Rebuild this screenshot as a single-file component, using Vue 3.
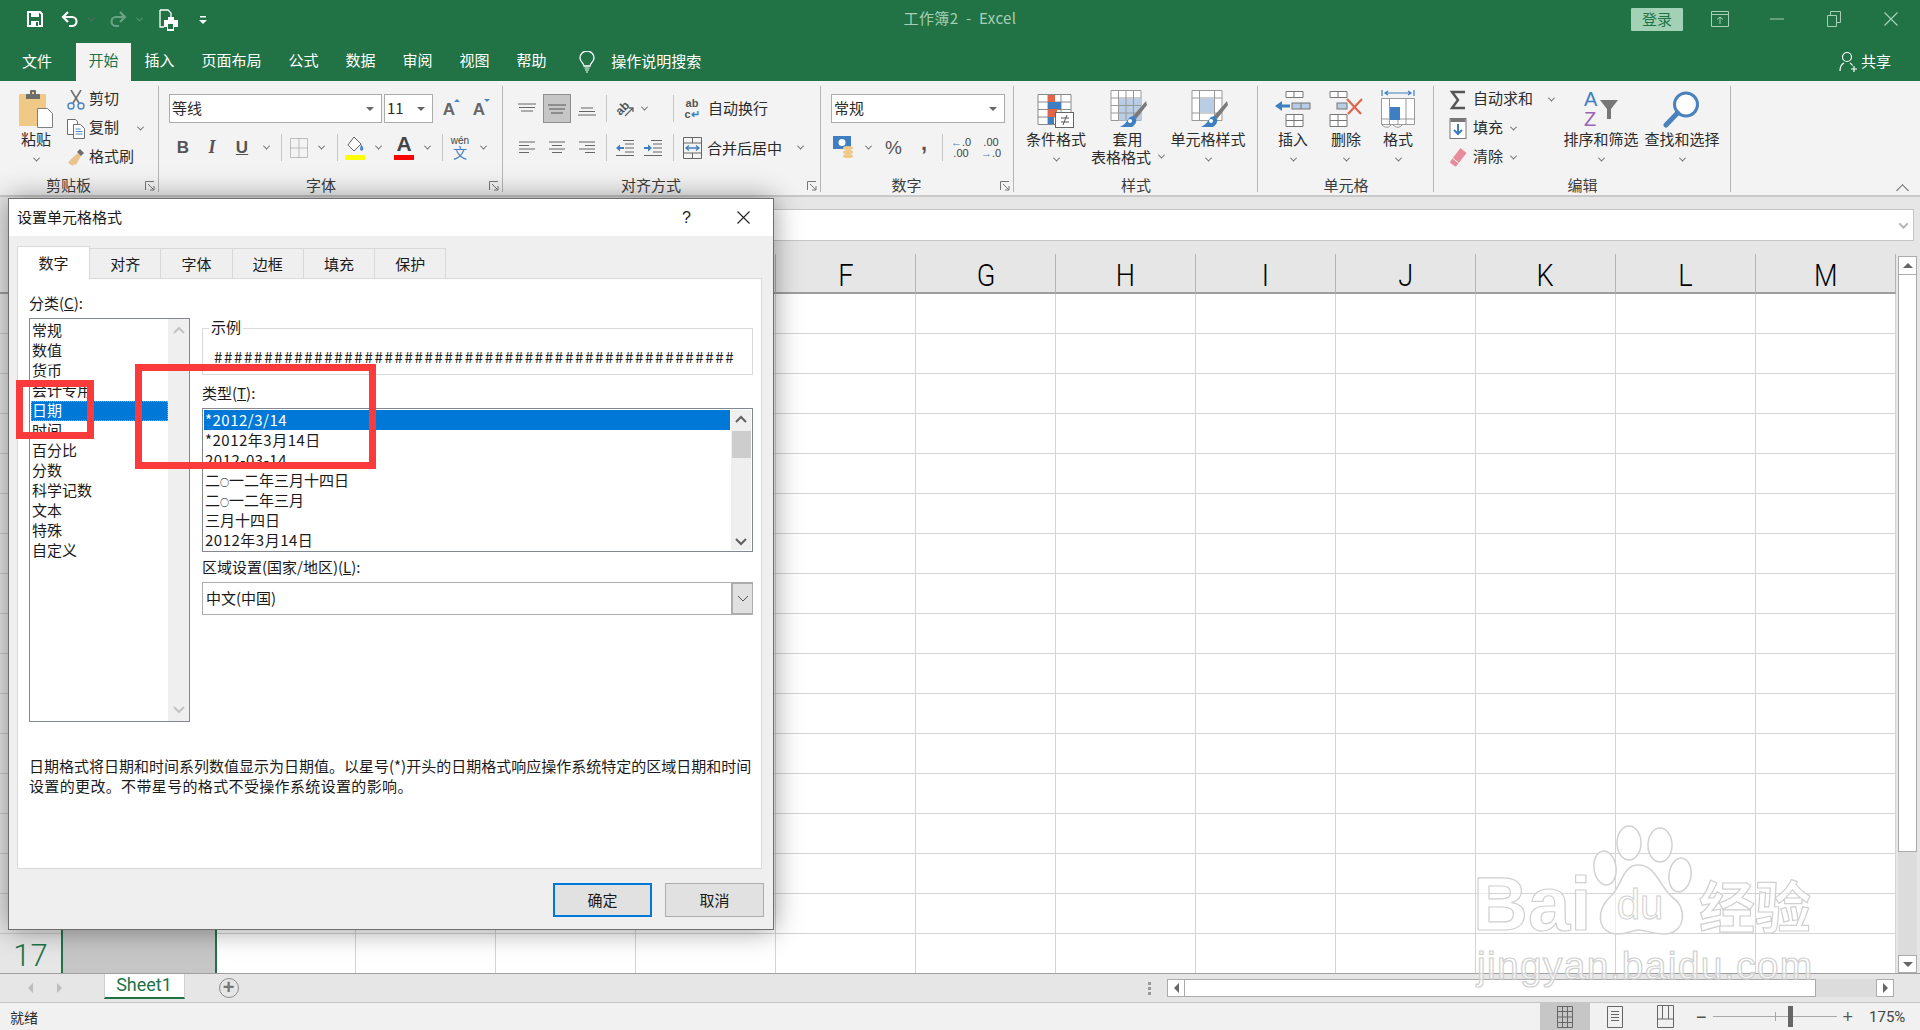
<script setup>
const tabs = ['插入', '页面布局', '公式', '数据', '审阅', '视图', '帮助']
// A-E sit behind the dialog
const columns = ['', '', '', '', 'F', 'G', 'H', 'I', 'J', 'K', 'L', 'M']
const rows = Array.from({ length: 17 }, (_, i) => i + 1)
const dialogTabs = ['数字', '对齐', '字体', '边框', '填充', '保护']
const categories = ['常规', '数值', '货币', '会计专用', '日期', '时间', '百分比', '分数', '科学记数', '文本', '特殊', '自定义']
const dateTypes = ['*2012/3/14', '*2012年3月14日', '2012-03-14', '二○一二年三月十四日', '二○一二年三月', '三月十四日', '2012年3月14日']
const sample = '#'.repeat(52)
const hasDigits = (t) => /\d/.test(t)
</script>

<template>
  <div class="app">
    <header class="titlebar">
      <div class="qat">
        <svg class="qat-save" width="16" height="16" viewBox="0 0 16 16"><path d="M1 1h12l2 2v12H1z" fill="none" stroke="#fff" stroke-width="2"/><path d="M4 1h8v5H4zM4 10h8v5H4z" fill="#fff"/><rect x="9" y="11" width="2" height="4" fill="#217346"/></svg>
        <svg class="qat-undo" width="18" height="17" viewBox="0 0 18 17"><path d="M7 1 2 6l5 5M2 6h9a4.500 4.500 0 0 1 0 9H8" fill="none" stroke="#fff" stroke-width="2.200"/></svg>
        <i class="chev chev-qat"></i>
        <svg class="qat-redo" width="18" height="17" viewBox="0 0 18 17"><path d="M11 1l5 5-5 5M16 6H7a4.500 4.500 0 0 0 0 9h3" fill="none" stroke="#69a284" stroke-width="2.200"/></svg>
        <i class="chev chev-qat dim"></i>
        <svg class="qat-print" width="20" height="23" viewBox="0 0 20 23"><path d="M1 1h8l3 3v4M1 1v17h4" fill="none" stroke="#fff" stroke-width="1.300"/><path d="M9 8h6v3h4v7h-4v4H8v-4H5v-7h4z" fill="#fff"/><rect x="9" y="15" width="5" height="5" fill="#217346"/></svg>
        <svg class="qat-more" width="8" height="8" viewBox="0 0 8 8"><path d="M1 0h6v1.500H1zM0 4h8L4 8z" fill="#fff"/></svg>
      </div>
      <div class="doc-title">工作簿2&nbsp; -&nbsp; Excel</div>
      <div class="win-controls">
        <span class="login">登录</span>
        <svg class="ctl ctl-ribbon" width="18" height="16" viewBox="0 0 18 16"><path d="M.5.500h17v15H.5zM.5 3.500h17M9 13V6M6 8.500 9 6l3 2.500" fill="none" stroke="#a6cfb6"/></svg>
        <svg class="ctl ctl-min" width="14" height="2" viewBox="0 0 14 2"><path d="M0 1h14" stroke="#a6cfb6"/></svg>
        <svg class="ctl ctl-max" width="14" height="16" viewBox="0 0 14 16"><path d="M.5 4.500h9v11h-9zM3.500 4V.5h10v11H10" fill="none" stroke="#a6cfb6"/></svg>
        <svg class="ctl ctl-close" width="14" height="14" viewBox="0 0 14 14"><path d="M.5.500l13 13M13.500.500l-13 13" stroke="#a6cfb6" stroke-width="1.200"/></svg>
      </div>
    </header>

    <nav class="menubar">
      <span class="tab-file">文件</span>
      <span class="tab tab-active">开始</span>
      <span v-for="tab in tabs" :key="tab" class="tab">{{ tab }}</span>
      <svg class="bulb" width="16" height="22" viewBox="0 0 16 22"><path d="M5 15c0-3-4-4-4-8a7 7 0 0 1 14 0c0 4-4 5-4 8z" fill="none" stroke="#fff" stroke-width="1.300"/><path d="M5.500 17h5M6 19h4M7 21h2" stroke="#fff"/></svg>
      <span class="search">操作说明搜索</span>
      <span class="share">
        <svg width="18" height="22" viewBox="0 0 18 22"><circle cx="8" cy="6" r="4.500" fill="none" stroke="#fff" stroke-width="1.200"/><path d="M1 20c0-5 2-7 4-8M11 12c1 .5 2 1.500 2.500 2.500M12 18h6M15 15v6" fill="none" stroke="#fff" stroke-width="1.200"/></svg>
        <span>共享</span>
      </span>
    </nav>

    <section class="ribbon">
      <!-- 剪贴板 -->
      <div class="group group-clip">
        <div class="group-body clip-body">
          <div class="big paste">
            <svg width="34" height="38" viewBox="0 0 34 38"><rect y="4" width="27" height="32" rx="1" fill="#f0c987"/><path d="M7 9V4h4V1a1 1 0 0 1 1-1h4a1 1 0 0 1 1 1v3h4v5z" fill="#6e6e6e"/><rect x="13" y="2" width="2" height="2" fill="#f0c987"/><path d="M18.500 18.500h10l5 5v14h-15z" fill="#fff" stroke="#7f7f7f"/></svg>
            <span class="big-label">粘贴</span>
            <i class="chev big-chev"></i>
          </div>
          <div class="small-col">
            <div class="small">
              <svg class="small-icon" width="18" height="20" viewBox="0 0 18 20"><path d="M4 0l8 13M14 0 6 13" stroke="#6e6e6e" stroke-width="1.600"/><circle cx="4" cy="16" r="3" fill="none" stroke="#4a86c5" stroke-width="1.400"/><circle cx="14" cy="16" r="3" fill="none" stroke="#4a86c5" stroke-width="1.400"/></svg>
              <span>剪切</span>
            </div>
            <div class="small">
              <svg class="small-icon" width="18" height="20" viewBox="0 0 18 20"><path d="M.5.500h8l2 2v13H.5z" fill="#fff" stroke="#6e6e6e"/><path d="M6.500 5.500h7l4 4v10h-11z" fill="#fff" stroke="#6e6e6e"/><path d="M8.500 10h5M8.500 12.500h7M8.500 15h7" stroke="#4a86c5"/></svg>
              <span>复制</span>
              <i class="chev copy-chev"></i>
            </div>
            <div class="small">
              <svg class="small-icon" width="18" height="18" viewBox="0 0 18 18"><path d="M11 4l3 3-5 9-2-1-1 2-5-3 3-4z" fill="#e7c48c"/><path d="M10 3l3-3 4 4-3 3z" fill="#6e6e6e"/></svg>
              <span>格式刷</span>
            </div>
          </div>
        </div>
        <div class="group-label">剪贴板</div>
        <svg class="launcher" width="10" height="10" viewBox="0 0 10 10"><path d="M.5 9V.5H9M3 3l6 6M9 5v4H5" fill="none" stroke="#777"/></svg>
      </div>

      <!-- 字体 -->
      <div class="group group-font">
        <div class="group-body padded">
          <div class="row-top">
            <div class="combo combo-font"><span>等线</span><i class="tri"></i></div>
            <div class="combo combo-size"><span>11</span><i class="tri"></i></div>
            <span class="grow">A<i class="up"></i></span>
            <span class="grow">A<i class="down"></i></span>
          </div>
          <div class="row-font">
            <span class="cmd bold">B</span>
            <span class="cmd italic">I</span>
            <span class="cmd under">U</span>
            <span class="cmd"><i class="chev"></i></span>
            <span class="cmd"><i class="vsep"></i></span>
            <span class="cmd">
              <svg width="18" height="20" viewBox="0 0 18 20"><path d="M.5.500h17v19H.5zM9 .5v19M.5 10h17" fill="none" stroke="#888" stroke-dasharray="1 1"/></svg>
            </span>
            <span class="cmd"><i class="chev"></i></span>
            <span class="cmd"><i class="vsep"></i></span>
            <span class="cmd">
              <svg width="20" height="24" viewBox="0 0 20 24"><path d="M9 1 3 9l6 6 7-7z" fill="#fff" stroke="#666"/><path d="M16 8c2 3 3 4 2 6-1 1-3 1-3-1z" fill="#4a86c5"/><rect y="19" width="20" height="5" fill="#ffff00"/></svg>
            </span>
            <span class="cmd"><i class="chev"></i></span>
            <span class="cmd font-color">A<i></i></span>
            <span class="cmd"><i class="chev"></i></span>
            <span class="cmd"><i class="vsep"></i></span>
            <span class="cmd wen"><b>wén</b><b>文</b></span>
            <span class="cmd"><i class="chev"></i></span>
          </div>
        </div>
        <div class="group-label">字体</div>
        <svg class="launcher" width="10" height="10" viewBox="0 0 10 10"><path d="M.5 9V.5H9M3 3l6 6M9 5v4H5" fill="none" stroke="#777"/></svg>
      </div>

      <!-- 对齐方式 -->
      <div class="group group-align">
        <div class="group-body padded">
          <div class="row-align-1">
            <span class="cmd"><svg width="18" height="12" viewBox="0 0 18 12"><path d="M0 1h18M1 4.500h16M3 8h12" stroke="#666"/></svg></span>
            <span class="cmd"><span class="pressed"><svg width="18" height="12" viewBox="0 0 18 12"><path d="M0 2h18M1 6h16M3 10h12" stroke="#555"/></svg></span></span>
            <span class="cmd"><svg class="down4" width="18" height="12" viewBox="0 0 18 12"><path d="M3 3h12M1 6.500h16M0 10h18" stroke="#666"/></svg></span>
            <span class="cmd"><i class="vsep"></i></span>
            <span class="cmd">
              <svg width="20" height="20" viewBox="0 0 20 20"><text class="orient" transform="rotate(-45 8 10)" x="1" y="13">ab</text><path d="M10 17 18 9M18 13V9h-4" fill="none" stroke="#666" stroke-width="1.300"/></svg>
            </span>
            <span class="cmd"><i class="chev"></i></span>
            <span></span>
            <span class="cmd"><i class="vsep"></i></span>
            <span class="cmd abc"><b>ab</b><b>c<small>↵</small></b></span>
            <span class="txt wrap-txt">自动换行</span>
          </div>
          <div class="row-align-2">
            <span class="cmd"><svg width="16" height="13" viewBox="0 0 16 13"><path d="M0 1h16M0 4.500h10M0 8h16M0 11.500h10" stroke="#666"/></svg></span>
            <span class="cmd"><svg width="16" height="13" viewBox="0 0 16 13"><path d="M0 1h16M3 4.500h10M0 8h16M3 11.500h10" stroke="#666"/></svg></span>
            <span class="cmd"><svg width="16" height="13" viewBox="0 0 16 13"><path d="M0 1h16M6 4.500h10M0 8h16M6 11.500h10" stroke="#666"/></svg></span>
            <span class="cmd"><i class="vsep"></i></span>
            <span class="cmd"><svg width="18" height="16" viewBox="0 0 18 16"><path d="M7 .5h11M9 4h9M9 8h9M9 12h9M0 15.500h18" stroke="#666"/><path d="M0 8l4-3.500v2.500h4v2H4v2.500z" fill="#3f7fc1"/></svg></span>
            <span class="cmd"><svg width="18" height="16" viewBox="0 0 18 16"><path d="M7 .5h11M9 4h9M9 8h9M9 12h9M0 15.500h18" stroke="#666"/><path d="M8 8 4 4.500V7H0v2h4v2.500z" fill="#3f7fc1"/></svg></span>
            <span class="cmd"><i class="vsep"></i></span>
            <span class="cmd"><svg width="19" height="22" viewBox="0 0 19 22"><path d="M.5.500h18v21H.5zM.5 6h18M.5 16h18M9.500.5V6M9.500 16v5.500" fill="none" stroke="#666"/><path d="M3 11h13M6 8.500 3 11l3 2.500M13 8.500l3 2.500-3 2.500" fill="none" stroke="#3f7fc1" stroke-width="1.300"/></svg></span>
            <span class="txt merge">合并后居中</span>
            <i class="chev merge-chev"></i>
          </div>
        </div>
        <div class="group-label">对齐方式</div>
        <svg class="launcher" width="10" height="10" viewBox="0 0 10 10"><path d="M.5 9V.5H9M3 3l6 6M9 5v4H5" fill="none" stroke="#777"/></svg>
      </div>

      <!-- 数字 -->
      <div class="group group-num">
        <div class="group-body padded">
          <div class="row-top"><div class="combo combo-num"><span>常规</span><i class="tri"></i></div></div>
          <div class="row-num">
            <span class="cmd"><svg width="22" height="24" viewBox="0 0 22 24"><rect width="18" height="13" fill="#3f7fc1"/><circle cx="9" cy="6.500" r="3.500" fill="#fff"/><ellipse cx="15" cy="12" rx="5" ry="2" fill="#f0c987"/><ellipse cx="15" cy="16" rx="5" ry="2" fill="#f0c987"/><ellipse cx="15" cy="20" rx="5" ry="2" fill="#f0c987"/></svg></span>
            <span class="cmd"><i class="chev"></i></span>
            <span class="cmd percent">%</span>
            <span class="cmd comma">,</span>
            <span class="cmd"><i class="vsep"></i></span>
            <span class="cmd dec"><b><u>←</u>.0</b><b>.00</b></span>
            <span class="cmd dec"><b>.00</b><b><u>→</u>.0</b></span>
          </div>
        </div>
        <div class="group-label">数字</div>
        <svg class="launcher" width="10" height="10" viewBox="0 0 10 10"><path d="M.5 9V.5H9M3 3l6 6M9 5v4H5" fill="none" stroke="#777"/></svg>
      </div>

      <!-- 样式 -->
      <div class="group group-style">
        <div class="group-body bigs">
          <div class="big w-cond">
            <svg width="38" height="38" viewBox="0 0 38 38"><path d="M1 4.500h33v30H1zM1 12h33M1 19.500h33M1 27h33M11 4.500v30M24 4.500v30" fill="#fff" stroke="#8a8a8a"/><rect x="11" y="5" width="7" height="7" fill="#e0654a"/><rect x="11" y="12" width="13" height="7" fill="#3f7fc1"/><rect x="11" y="19" width="9" height="8" fill="#e0654a"/><rect x="11" y="27" width="6" height="7" fill="#3f7fc1"/><rect x="18.500" y="22.500" width="18" height="15" fill="#fff" stroke="#666"/><path d="M24 28h8M24 32h8M30 25l-4 10" stroke="#555"/></svg>
            <span class="big-label">条件格式</span>
            <i class="chev big-chev"></i>
          </div>
          <div class="big w-table">
            <svg class="nudge" width="38" height="38" viewBox="0 0 38 38"><path d="M1 .5h30v30H1zM1 8h30M1 15.500h30M1 23h30M8.500.5v30M16 .5v30M23.500.5v30" fill="#fff" stroke="#999"/><rect x="9" y="8.500" width="22" height="22" fill="#b9cde5"/><path d="M8.500 8v22M16 8v22M23.500 8v22M8.500 15.500H31M8.500 23H31" stroke="#999"/><path d="M36 11 23 26l3 3 11-14z" fill="#7a7a7a"/><path d="M24 26c-5 0-6 4-7 5-2 3-4 4-7 6h12c3-2 5-5 4-8z" fill="#3f7fc1"/><circle cx="20" cy="31" r="2" fill="#fff"/></svg>
            <span class="big-label">套用</span>
            <span class="big-label second">表格格式<i class="chev inline-chev"></i></span>
          </div>
          <div class="big w-cell">
            <svg class="nudge" width="38" height="38" viewBox="0 0 38 38"><path d="M1 .5h30v30H1zM1 8h30M1 23h30M8.500.5V8M23.500.5V8M8.500 23v7.500M23.500 23v7.500M8.500 8v15M23.500 8v15" fill="#fff" stroke="#999"/><rect x="9" y="8.500" width="14" height="14" fill="#b9cde5"/><path d="M36 11 23 26l3 3 11-14z" fill="#7a7a7a"/><path d="M24 26c-5 0-6 4-7 5-2 3-4 4-7 6h12c3-2 5-5 4-8z" fill="#3f7fc1"/><circle cx="20" cy="31" r="2" fill="#fff"/></svg>
            <span class="big-label">单元格样式</span>
            <i class="chev big-chev"></i>
          </div>
        </div>
        <div class="group-label">样式</div>
      </div>

      <!-- 单元格 -->
      <div class="group group-cells">
        <div class="group-body bigs">
          <div class="big w-ins">
            <svg width="38" height="38" viewBox="0 0 38 38"><path d="M12 1.500h17v6H12zM20 1.500v6M12 24.500h17v12H12zM20 24.500v12M12 30.500h17" fill="#fff" stroke="#777"/><rect x="18" y="13" width="18" height="6" fill="#b9cde5" stroke="#777"/><path d="M27 13v6" stroke="#777"/><path d="M1 16l7-5v3.500h8v3H8V21z" fill="#3f7fc1"/></svg>
            <span class="big-label">插入</span>
            <i class="chev big-chev"></i>
          </div>
          <div class="big w-del">
            <svg width="38" height="38" viewBox="0 0 38 38"><path d="M3 1.500h17v6H3zM11 1.500v6M3 24.500h17v12H3zM11 24.500v12M3 30.500h17" fill="#fff" stroke="#777"/><rect x="10" y="13" width="10" height="6" fill="#b9cde5" stroke="#777"/><path d="M20 9l14 15M35 9 21 24" stroke="#e0654a" stroke-width="2.200"/></svg>
            <span class="big-label">删除</span>
            <i class="chev big-chev"></i>
          </div>
          <div class="big w-fmt">
            <svg width="38" height="38" viewBox="0 0 38 38"><path d="M3 0v6M35 0v6M6 3h26M9 1 6 3l3 2M29 1l3 2-3 2" fill="none" stroke="#3f7fc1" stroke-width="1.200"/><path d="M2.500 8.500h33v26h-33zM2.500 29h33M10.500 8.500v26M27 8.500v26M19 29v5" fill="#fff" stroke="#999"/><rect x="11" y="17" width="10" height="13" fill="#3f7fc1"/><path d="M3 35c3 3 7 3 9 0M14 35c3 3 7 3 9 0" fill="none" stroke="#999"/></svg>
            <span class="big-label">格式</span>
            <i class="chev big-chev"></i>
          </div>
        </div>
        <div class="group-label">单元格</div>
      </div>

      <!-- 编辑 -->
      <div class="group group-edit">
        <div class="group-body edit-body">
          <div class="small-col edit-col">
            <div class="small">
              <svg class="small-icon" width="16" height="20" viewBox="0 0 16 20"><path d="M15 2H2l6 8-6 8h13" fill="none" stroke="#555" stroke-width="2.400"/></svg>
              <span>自动求和</span>
              <i class="chev sum-chev"></i>
            </div>
            <div class="small">
              <svg class="small-icon" width="17" height="21" viewBox="0 0 17 21"><rect x=".5" y=".5" width="16" height="20" fill="#fff" stroke="#777"/><rect x="1" y="1" width="15" height="3" fill="#777"/><path d="M8.500 6v10M4.500 12l4 4 4-4" fill="none" stroke="#3f7fc1" stroke-width="2"/></svg>
              <span>填充</span>
              <i class="chev fill-chev"></i>
            </div>
            <div class="small">
              <svg class="small-icon" width="17" height="19" viewBox="0 0 17 19"><path d="M11 0l6 5-10 13a1.500 1.500 0 0 1-2 0L1 15a1.500 1.500 0 0 1 0-2z" fill="#e88b9c"/><path d="M3 10l6 5" stroke="#fff"/></svg>
              <span>清除</span>
              <i class="chev fill-chev"></i>
            </div>
          </div>
          <div class="big w-sort">
            <svg width="38" height="38" viewBox="0 0 38 38"><text class="sort-a" x="2" y="16">A</text><text class="sort-z" x="2" y="36">Z</text><path d="M18 10h18l-7 9v10h-4V19z" fill="#777"/></svg>
            <span class="big-label">排序和筛选</span>
            <i class="chev big-chev"></i>
          </div>
          <div class="big w-find">
            <svg width="38" height="38" viewBox="0 0 38 38"><circle cx="23" cy="14.500" r="11.500" fill="#fff" stroke="#4a82bd" stroke-width="3"/><path d="M14.500 23 3 35" stroke="#4a82bd" stroke-width="5" stroke-linecap="round"/></svg>
            <span class="big-label">查找和选择</span>
            <i class="chev big-chev"></i>
          </div>
        </div>
        <div class="group-label">编辑</div>
      </div>

      <i class="chev collapse"></i>
    </section>

    <div class="formula-bar">
      <div class="formula-input"><i class="chev chev-wide"></i></div>
    </div>

    <main class="sheet">
      <div class="grid">
        <div class="corner"></div>
        <div class="col-head"></div>
        <div v-for="(col, i) in columns" :key="i" class="col-head"><span>{{ col }}</span></div>
        <template v-for="row in rows" :key="row">
          <div class="row-head">{{ row === 17 ? row : '' }}</div>
          <div class="cell cell-a"></div>
          <div v-for="(col, i) in columns" :key="i" class="cell"></div>
        </template>
      </div>
      <div class="vscroll">
        <div class="sb-btn"><i class="tri tri-up"></i></div>
        <div class="sb-thumb"></div>
        <div class="sb-track"></div>
        <div class="sb-btn sb-btn-end"><i class="tri"></i></div>
      </div>
    </main>

    <div class="sheetbar">
      <i class="nav nav-left"></i>
      <i class="nav nav-right"></i>
      <div class="sheet-tab">Sheet1</div>
      <div class="add-sheet">+</div>
      <div class="dots"></div>
      <div class="hscroll">
        <div class="h-btn"><i class="nav nav-left dark"></i></div>
        <div class="h-thumb"></div>
        <div class="h-track"></div>
        <div class="h-btn"><i class="nav nav-right dark"></i></div>
      </div>
    </div>

    <footer class="statusbar">
      <span class="ready">就绪</span>
      <div class="view view-on"><svg width="16" height="22" viewBox="0 0 16 22"><path d="M.5.500h15v21H.5zM.5 5.500h15M.5 11h15M.5 16.500h15M5.500.5v21M10.500.5v21" fill="none" stroke="#666"/></svg></div>
      <div class="view"><svg width="16" height="22" viewBox="0 0 16 22"><path d="M.5.500h15v21H.5zM4 5.500h8M4 8.500h8M4 11.500h8M4 14.500h8" fill="none" stroke="#666"/></svg></div>
      <div class="view"><svg width="17" height="23" viewBox="0 0 17 23"><path d="M.5.500h16v22H.5zM.5 14h16M5.500.5V14M11.500.5V14" fill="none" stroke="#666"/></svg></div>
      <span class="zoom-sign zoom-minus">−</span>
      <div class="slider"><i class="slider-mid"></i><i class="slider-thumb"></i></div>
      <span class="zoom-sign">+</span>
      <span class="zoom-value">175%</span>
    </footer>

    <!-- 设置单元格格式 -->
    <div class="dialog">
      <div class="dlg-title">
        <span class="dlg-name">设置单元格格式</span>
        <span class="dlg-help">?</span>
        <svg width="13" height="13" viewBox="0 0 13 13"><path d="M.5.500l12 12M12.500.5l-12 12" stroke="#222" stroke-width="1.100"/></svg>
      </div>
      <div class="dlg-body">
        <div class="dlg-tabs">
          <div v-for="(tab, i) in dialogTabs" :key="tab" :class="['dlg-tab', { on: i === 0 }]">{{ tab }}</div>
        </div>
        <div class="dlg-panel">
          <div class="panel-main">
            <div class="col-left">
              <div class="field-label">分类(<u>C</u>):</div>
              <div class="list cat-list">
                <div class="list-items">
                  <div v-for="c in categories" :key="c" :class="['list-row', { sel: c === '日期' }]">{{ c }}</div>
                </div>
                <div class="list-sb">
                  <svg width="12" height="8" viewBox="0 0 12 8"><path d="M1 7l5-5 5 5" fill="none" stroke="#c4c4c4" stroke-width="2"/></svg>
                  <svg width="12" height="8" viewBox="0 0 12 8"><path d="M1 1l5 5 5-5" fill="none" stroke="#c4c4c4" stroke-width="2"/></svg>
                </div>
              </div>
            </div>
            <div class="col-right">
              <div class="sample">
                <span class="sample-legend">示例</span>
                <span class="sample-value">{{ sample }}</span>
              </div>
              <div class="field-label type-label">类型(<u>T</u>):</div>
              <div class="list type-list">
                <div class="list-items">
                  <div v-for="(t, i) in dateTypes" :key="t" :class="['list-row', { active: i === 0, digits: hasDigits(t) }]">
                    <template v-for="(part, j) in t.split('○')" :key="j"><small v-if="j" class="zero">○</small>{{ part }}</template>
                  </div>
                </div>
                <div class="list-sb dark">
                  <svg width="12" height="8" viewBox="0 0 12 8"><path d="M1 7l5-5 5 5" fill="none" stroke="#606060" stroke-width="2"/></svg>
                  <i class="list-thumb"></i>
                  <svg class="sb-end" width="12" height="8" viewBox="0 0 12 8"><path d="M1 1l5 5 5-5" fill="none" stroke="#606060" stroke-width="2"/></svg>
                </div>
              </div>
              <div class="field-label locale-label">区域设置(国家/地区)(<u>L</u>):</div>
              <div class="select">
                <span>中文(中国)</span>
                <div class="select-btn"><svg width="12" height="7" viewBox="0 0 12 7"><path d="M1 1l5 5 5-5" fill="none" stroke="#555"/></svg></div>
              </div>
            </div>
          </div>
          <p class="desc">
            <span>日期格式将日期和时间系列数值显示为日期值。以星号(*)开头的日期格式响应操作系统特定的区域日期和时间</span>
            <span class="desc-2">设置的更改。不带星号的格式不受操作系统设置的影响。</span>
          </p>
        </div>
        <div class="dlg-foot">
          <div class="btn btn-default">确定</div>
          <div class="btn">取消</div>
        </div>
      </div>
    </div>

    <!-- 截图上的红框 -->
    <div class="mark mark-cat"></div>
    <div class="mark mark-type"></div>

    <!-- 水印 -->
    <div class="wm wm-bai">Bai</div>
    <svg class="wm wm-paw" width="102" height="112" viewBox="0 0 102 112">
      <g fill="rgba(255,255,255,.6)" stroke="#d2d2d2" stroke-width="1.500">
        <ellipse cx="13" cy="43" rx="11" ry="17" transform="rotate(-8 13 43)"/>
        <ellipse cx="37" cy="18" rx="12" ry="17"/>
        <ellipse cx="68" cy="20" rx="12" ry="17"/>
        <ellipse cx="88" cy="50" rx="11" ry="17" transform="rotate(8 88 50)"/>
        <path d="M46 40C30 40 30 62 18 72 4 84 4 109 26 109c10 0 14-4 21-4s13 4 25 4c22 0 24-27 8-37C68 62 64 40 46 40z"/>
      </g>
      <text class="wm-du" x="48" y="94" text-anchor="middle" font-size="42">du</text>
    </svg>
    <div class="wm wm-cn">经验</div>
    <div class="wm wm-url">jingyan.baidu.com</div>
  </div>
</template>

<style scoped>
.app {
  position: relative;
  width: 1920px;
  height: 1030px;
  overflow: hidden;
  display: flex;
  flex-direction: column;
  font-family: "Noto Sans CJK SC", "Noto Sans", sans-serif;
  font-size: 15px;
  color: #2b2b2b;
  background: #fff;
}

/* title bar */
.titlebar {
  height: 43px;
  flex: none;
  display: grid;
  grid-template-columns: 1fr auto 1fr;
  align-items: center;
  background: #217346;
  padding-bottom: 5px;
  box-sizing: border-box;
}
.qat { display: flex; align-items: center; padding-left: 27px; }
.qat-undo { margin-left: 18px; }
.chev-qat { margin-left: 10px; border-color: #9cc7ae; }
.chev-qat.dim { border-color: #5f9a7a; }
.qat-redo { margin-left: 15px; }
.qat-print { margin-left: 17px; margin-top: 2px; }
.qat-more { margin-left: 20px; margin-top: 2px; }
.doc-title { color: #a6cfb6; font-size: 15px; line-height: 18px; padding-bottom: 2px; letter-spacing: .4px; }
.win-controls { display: flex; align-items: center; justify-content: flex-end; position: relative; height: 23px; }
.login {
  width: 52px;
  height: 23px;
  line-height: 21px;
  text-align: center;
  background: #a3d1b5;
  color: #217346;
  border-radius: 1px;
  margin-right: 28px;
}
.ctl-min { margin-left: 41px; }
.ctl-max { margin-left: 43px; }
.ctl-close { margin-left: 43px; margin-right: 22px; }

/* tabs */
.menubar {
  height: 38px;
  flex: none;
  display: flex;
  align-items: center;
  background: #217346;
  color: #fff;
}
.tab-file { width: 76px; padding-right: 2px; box-sizing: border-box; text-align: center; margin-bottom: 4px; }
.tab { padding: 0 13.500px 4px; line-height: 34px; }
.tab-active { padding: 0 12.500px 4px; background: #f3f3f3; color: #217346; }
.bulb { margin-left: 19px; }
.search { margin-left: 16px; margin-bottom: 4px; }
.share { margin-left: auto; margin-right: 29px; display: flex; align-items: center; gap: 4px; }
.share span { margin-bottom: 4px; }

/* ribbon */
.ribbon {
  position: relative;
  height: 116px;
  flex: none;
  display: flex;
  background: #f3f3f3;
  border-bottom: 2px solid #c9c9c9;
  box-sizing: border-box;
}
.group { position: relative; flex: none; height: 114px; }
.group::after {
  content: "";
  position: absolute;
  right: 0;
  top: 5px;
  bottom: 3px;
  width: 1px;
  background: #b5b5b5;
}
.group-clip { width: 159px; }
.group-font { width: 344px; }
.group-align { width: 318px; }
.group-num { width: 193px; }
.group-style { width: 244px; }
.group-cells { width: 176px; }
.group-edit { width: 297px; }
.group-body { height: 94px; box-sizing: border-box; }
.group-label { height: 20px; line-height: 20px; text-align: center; color: #3c3c3c; }
.group-clip .group-label, .group-align .group-label, .group-num .group-label { padding-right: 22px; }
.group-font .group-label { padding-right: 20px; }
.launcher { position: absolute; right: 4px; bottom: 4px; }
.padded { padding: 13px 0 0 10px; }

.chev {
  display: inline-block;
  width: 5px;
  height: 5px;
  box-sizing: border-box;
  border-right: 1px solid #666;
  border-bottom: 1px solid #666;
  transform: rotate(45deg) translate(-1px, -1px);
}
.vsep { display: block; width: 1px; height: 27px; background: #c6c6c6; }
.cmd { display: flex; align-items: center; justify-content: center; height: 29px; color: #555; }

.clip-body { display: flex; padding: 4px 0 0 10px; }
.paste { width: 52px; padding-top: 5px; }
.big { display: flex; flex-direction: column; align-items: center; flex: none; }
.big svg { flex: none; }
.big-label { line-height: 20px; margin-top: 1px; white-space: nowrap; color: #2b2b2b; }
.big-label.second { margin-top: -2px; }
.big-chev { margin-top: 8px; }
.inline-chev { margin-left: 8px; vertical-align: 4px; }
.nudge { margin-left: 3px; }
.small-col { display: flex; flex-direction: column; margin-left: 1px; }
.small { display: flex; align-items: center; height: 29px; }
.small > span { margin-bottom: 4px; }
.small-icon { flex: none; margin: 0 4px 0 4px; }
.copy-chev { margin-left: 19px; }

.row-top { display: flex; align-items: center; height: 29px; gap: 2px; }
.combo {
  height: 29px;
  box-sizing: border-box;
  display: flex;
  align-items: center;
  justify-content: space-between;
  background: #fff;
  border: 1px solid #ababab;
  padding: 0 7px 0 2px;
}
.combo span { margin-bottom: 3px; }
.combo-font { width: 213px; }
.combo-size { width: 49px; }
.combo-num { width: 174px; }
.tri {
  display: block;
  width: 0;
  height: 0;
  border-left: 4px solid transparent;
  border-right: 4px solid transparent;
  border-top: 4px solid #666;
}
.grow {
  position: relative;
  width: 28px;
  text-align: center;
  font-family: "Liberation Sans", sans-serif;
  font-size: 17px;
  font-weight: 700;
  color: #666;
  padding-top: 2px;
}
.grow i {
  position: absolute;
  right: 3px;
  top: 1px;
  width: 0;
  height: 0;
  border-left: 3px solid transparent;
  border-right: 3px solid transparent;
}
.grow .up { border-bottom: 3px solid #4a86c5; }
.grow .down { border-top: 3px solid #4a86c5; }

.row-font {
  display: grid;
  grid-template-columns: 28px 30px 30px 18px 12px 23px 23px 8px 28px 18px 34px 12px 18px 18px 28px;
  margin-top: 10px;
}
.bold, .italic, .under { font-family: "Liberation Sans", sans-serif; font-size: 17px; font-weight: 700; color: #555; }
.italic { font-style: italic; font-family: "Liberation Serif", serif; font-size: 18px; }
.under { text-decoration: underline; }
.font-color {
  position: relative;
  font-family: "Liberation Sans", sans-serif;
  font-size: 21px;
  font-weight: 700;
  color: #444;
  line-height: 20px;
  padding-bottom: 7px;
  box-sizing: border-box;
}
.font-color i {
  position: absolute;
  left: 7px;
  right: 7px;
  bottom: 2px;
  height: 5px;
  background: #f00;
}
.wen { flex-direction: column; line-height: 11px; font-family: "Liberation Sans", "Noto Sans CJK SC", sans-serif; }
.wen b { font-weight: 400; font-size: 10px; color: #444; }
.wen b + b { font-size: 14px; color: #3f7fc1; line-height: 15px; }

.row-align-1 {
  display: grid;
  grid-template-columns: 28px 32px 28px 10px 27px 12px 18px 11px 26px auto;
  justify-content: start;
  align-items: center;
  height: 29px;
}
.row-align-2 {
  display: grid;
  grid-template-columns: 28px 32px 28px 10px 27px 30px 11px 26px auto auto;
  justify-content: start;
  align-items: center;
  height: 29px;
  margin-top: 10px;
}
.pressed {
  width: 28px;
  height: 29px;
  display: flex;
  align-items: center;
  justify-content: center;
  box-sizing: border-box;
  background: #c6c6c6;
  border: 1px solid #8f8f8f;
}
.down4 { margin-top: 4px; }
.orient { font-family: "Liberation Sans", sans-serif; font-size: 12px; font-weight: 700; fill: #555; }
.txt { margin-left: 3px; }
.wrap-txt { margin-bottom: 3px; }
.merge { margin-left: 2px; }
.merge-chev { margin-left: 16px; }
.abc { flex-direction: column; font-family: "Liberation Sans", sans-serif; line-height: 11px; }
.abc b { font-size: 11px; color: #555; }
.abc small { color: #3f7fc1; font-size: 11px; }

.row-num {
  display: grid;
  grid-template-columns: 26px 22px 29px 32px 5px 32px 28px;
  margin-top: 10px;
}
.percent { font-family: "Liberation Sans", sans-serif; font-size: 19px; }
.comma { font-family: "Liberation Sans", sans-serif; font-size: 22px; font-weight: 700; padding-bottom: 10px; box-sizing: border-box; }
.dec { flex-direction: column; font-family: "Liberation Sans", sans-serif; font-size: 11px; line-height: 11px; }
.dec b { font-weight: 400; color: #444; white-space: nowrap; }
.dec u { text-decoration: none; color: #3f7fc1; font-weight: 700; }

.bigs { display: flex; padding-top: 9px; }
.group-style .bigs { padding-left: 7px; }
.group-cells .bigs { padding-left: 8px; }
.w-cond { width: 70px; }
.w-table { width: 73px; }
.w-cell { width: 88px; }
.w-ins { width: 54px; }
.w-del, .w-fmt { width: 52px; }

.edit-body { display: flex; padding-top: 4px; padding-left: 12px; }
.edit-col { width: 113px; flex: none; }
.edit-col .small-icon { width: 22px; margin: 0 4px 0 0; }
.sum-chev { margin-left: 16px; }
.fill-chev { margin-left: 8px; }
.w-sort, .w-find { padding-top: 5px; }
.w-sort { width: 82px; }
.w-find { width: 80px; }
.sort-a, .sort-z { font-family: "Liberation Sans", sans-serif; font-size: 20px; font-weight: 400; }
.sort-a { fill: #3f7fc1; }
.sort-z { fill: #9a63b8; }
.collapse {
  position: absolute;
  right: 13px;
  bottom: 0;
  width: 9px;
  height: 9px;
  transform: rotate(225deg);
}

/* formula bar */
.formula-bar { height: 57px; flex: none; box-sizing: border-box; padding: 12px 6px 0 200px; background: #e6e6e6; }
.formula-input {
  height: 32px;
  box-sizing: border-box;
  display: flex;
  align-items: center;
  justify-content: flex-end;
  padding-right: 6px;
  background: #fff;
  border: 1px solid #c6c6c6;
}
.chev-wide { width: 7px; height: 7px; border-width: 2px; border-color: #b4b4b4; }

/* sheet */
.sheet { height: 719px; flex: none; display: flex; background: #e6e6e6; overflow: hidden; }
.grid {
  display: grid;
  grid-template-columns: 61px 156px 139px repeat(11, 140px);
  grid-template-rows: 40px repeat(17, 40px);
  width: 1896px;
  flex: none;
  background: #fff;
}
.corner, .col-head, .row-head { background: #e6e6e6; }
.corner { border-bottom: 2px solid #9e9e9e; box-sizing: border-box; }
.col-head {
  display: flex;
  align-items: center;
  justify-content: center;
  box-sizing: border-box;
  border-right: 1px solid #b4b4b4;
  border-bottom: 2px solid #9e9e9e;
  font-family: Roboto, sans-serif;
  font-weight: 300;
  font-size: 32px;
  color: #000;
  padding-top: 4px;
}
.col-head span { display: block; transform: scaleX(.85); }
.row-head {
  display: flex;
  align-items: center;
  justify-content: center;
  box-sizing: border-box;
  border-bottom: 1px solid #c9c9c9;
  font-family: Roboto, sans-serif;
  font-weight: 300;
  font-size: 31px;
  color: #217346;
  padding-top: 3px;
}
.cell { box-sizing: border-box; border-right: 1px solid #d4d4d4; border-bottom: 1px solid #d4d4d4; }
.cell-a { background: #c6c6c6; border-left: 2px solid #217346; border-right: 2px solid #217346; border-bottom: 0; }

.vscroll { flex: 1; box-sizing: border-box; padding: 2px 3px 0 2px; display: flex; flex-direction: column; }
.sb-btn {
  height: 19px;
  flex: none;
  box-sizing: border-box;
  display: flex;
  align-items: center;
  justify-content: center;
  background: #fff;
  border: 1px solid #ababab;
}
.sb-btn-end { height: 18px; }
.tri-up { border-top: 0; border-bottom: 5px solid #666; }
.vscroll .tri { border-left-width: 5px; border-right-width: 5px; }
.vscroll .tri:not(.tri-up) { border-top-width: 5px; }
.sb-thumb { height: 577px; flex: none; box-sizing: border-box; background: #fff; border: 1px solid #ababab; border-top: 0; }
.sb-track { flex: 1; background: #dcdcdc; }

/* sheet tabs */
.sheetbar {
  height: 30px;
  flex: none;
  box-sizing: border-box;
  display: flex;
  align-items: center;
  background: #e6e6e6;
  border-top: 1px solid #a0a0a0;
  border-bottom: 1px solid #c6c6c6;
}
.nav { width: 0; height: 0; flex: none; border-top: 5px solid transparent; border-bottom: 5px solid transparent; }
.nav-left { border-right: 5px solid #bcbcbc; }
.nav-right { border-left: 5px solid #bcbcbc; }
.sheetbar > .nav-left { margin-left: 28px; }
.sheetbar > .nav-right { margin-left: 24px; }
.nav.dark { border-left-color: #666; border-right-color: #666; }
.sheet-tab {
  width: 81px;
  height: 25px;
  margin: 0 0 4px 41.500px;
  box-sizing: border-box;
  text-align: center;
  background: #fff;
  border: 1px solid #d0d0d0;
  border-top: 0;
  border-bottom: 2px solid #217346;
  color: #217346;
  font-family: Roboto, sans-serif;
  font-size: 18px;
  line-height: 22px;
}
.add-sheet {
  width: 18px;
  height: 18px;
  margin-left: 34px;
  border: 1.500px solid #8c8c8c;
  border-radius: 50%;
  text-align: center;
  line-height: 17px;
  font-family: "Liberation Sans", sans-serif;
  font-size: 20px;
  font-weight: 700;
  color: #777;
}
.dots {
  width: 3px;
  height: 13px;
  margin-left: 909.500px;
  background: repeating-linear-gradient(to bottom, #9a9a9a 0 3px, transparent 3px 5px);
}
.hscroll { display: flex; align-items: center; width: 727px; height: 18px; margin-left: 16px; }
.h-btn {
  width: 18px;
  height: 18px;
  flex: none;
  box-sizing: border-box;
  display: flex;
  align-items: center;
  justify-content: center;
  background: #fff;
  border: 1px solid #ababab;
}
.h-thumb { width: 631px; height: 18px; box-sizing: border-box; background: #fff; border: 1px solid #ababab; border-left: 0; }
.h-track { flex: 1; height: 18px; background: #dcdcdc; }

/* status bar */
.statusbar { flex: 1; display: flex; align-items: center; background: #f1f1f1; font-size: 14px; }
.ready { margin-left: 10px; margin-right: 1502px; }
.view { width: 50px; height: 100%; display: flex; align-items: center; justify-content: center; }
.view-on { background: #c6c6c6; }
.zoom-sign { font-family: "Liberation Sans", sans-serif; font-size: 18px; color: #555; line-height: 1; }
.zoom-minus { margin-left: 6px; }
.slider { position: relative; width: 124px; height: 1px; margin: 0 6px; background: #a8a8a8; }
.slider-mid { position: absolute; left: 62px; top: -4px; width: 1px; height: 9px; background: #a8a8a8; }
.slider-thumb { position: absolute; left: 75px; top: -10px; width: 5px; height: 21px; background: #666; }
.zoom-value { margin-left: 16px; font-family: Roboto, sans-serif; font-size: 15px; color: #444; white-space: nowrap; }

/* dialog */
.dialog {
  position: absolute;
  left: 8px;
  top: 198px;
  width: 766px;
  height: 732px;
  box-sizing: border-box;
  display: flex;
  flex-direction: column;
  background: #efefef;
  border: 1px solid #6e6e6e;
  box-shadow: 0 0 26px rgba(0, 0, 0, .4);
  color: #1a1a1a;
}
.dlg-title {
  height: 37px;
  flex: none;
  box-sizing: border-box;
  display: flex;
  align-items: center;
  padding: 0 23px 0 8px;
  background: #fff;
}
.dlg-name { margin-bottom: 2px; }
.dlg-help { margin-left: auto; margin-right: 46px; font-family: "Liberation Sans", sans-serif; font-size: 16px; }
.dlg-body { flex: 1; display: flex; flex-direction: column; min-height: 0; }
.dlg-tabs { display: flex; align-items: flex-end; height: 42px; padding-left: 8px; flex: none; position: relative; z-index: 1; }
.dlg-tab {
  width: 71.300px;
  height: 30px;
  box-sizing: border-box;
  text-align: center;
  line-height: 29px;
  border: 1px solid #d9d9d9;
  border-left: 0;
  border-bottom: 0;
}
.dlg-tab.on { width: 73px; height: 33px; margin-bottom: -1px; background: #fff; border-left: 1px solid #d9d9d9; line-height: 31px; }
.dlg-panel {
  height: 591px;
  width: 745px;
  margin-left: 8px;
  flex: none;
  box-sizing: border-box;
  background: #fff;
  border: 1px solid #d9d9d9;
  padding: 15px 0 0 11px;
}
.panel-main { display: flex; gap: 12px; }
.col-left { width: 161px; flex: none; }
.col-right { width: 551px; flex: none; padding-top: 34px; }
.field-label { line-height: 18px; height: 20px; }
.list {
  display: flex;
  box-sizing: border-box;
  background: #fff;
  border: 1px solid #828790;
}
.list-items { flex: 1; min-width: 0; overflow: hidden; }
.list-row { height: 20px; line-height: 20px; padding-left: 1px; white-space: nowrap; box-sizing: border-box; }
.cat-list { height: 404px; margin-top: 4px; }
.cat-list .list-items { padding: 2px 0 0 1px; }
.cat-list .list-row { padding-left: 1px; line-height: 17px; }
.list-row.sel { background: #0078d7; color: #fff; outline: 1px dotted #e69a2e; outline-offset: -1px; }
.list-row.active { background: #0078d7; color: #fff; }
.list-row.digits { letter-spacing: .5px; }
.zero { font-size: 9px; font-weight: 700; color: #000; }
.list-sb {
  width: 21px;
  flex: none;
  display: flex;
  flex-direction: column;
  align-items: center;
  justify-content: space-between;
  padding: 7px 0;
  box-sizing: border-box;
  background: #efefef;
}
.type-list { height: 144px; margin-top: 4px; }
.type-list .list-items { padding: 1px 0 0 1px; }
.list-sb.dark { width: 20px; margin: 1px 1px 1px 1px; padding: 5px 0 4px; justify-content: flex-start; }
.list-thumb { display: block; width: 19px; height: 27px; margin-top: 8px; background: #cdcdcd; }
.sb-end { margin-top: auto; }
.sample {
  position: relative;
  height: 47px;
  box-sizing: border-box;
  border: 1px solid #d9d9d9;
  padding: 18px 0 0 11px;
  line-height: 20px;
}
.sample-legend { position: absolute; left: 6px; top: -12px; padding: 0 2px; background: #fff; }
.sample-value { letter-spacing: 1.700px; white-space: nowrap; }
.type-label { margin-top: 9px; }
.locale-label { margin-top: 6px; }
.select {
  display: flex;
  align-items: center;
  justify-content: space-between;
  height: 33px;
  margin-top: 4px;
  box-sizing: border-box;
  padding-left: 3px;
  border: 1px solid #adadad;
}
.select span { margin-bottom: 2px; }
.select-btn {
  width: 21px;
  height: 100%;
  box-sizing: border-box;
  display: flex;
  align-items: center;
  justify-content: center;
  background: #e1e1e1;
  border: 2px solid #adadad;
  border-top-width: 1px;
  border-bottom-width: 1px;
  border-right: 0;
}
.desc { margin: 34px 0 0; line-height: 20px; white-space: nowrap; }
.desc span { display: block; }
.desc-2 { letter-spacing: .35px; }
.dlg-foot { flex: 1; display: flex; gap: 13px; justify-content: flex-end; padding: 14px 9px 0 0; }
.btn {
  width: 99px;
  height: 34px;
  box-sizing: border-box;
  text-align: center;
  line-height: 31px;
  background: #e1e1e1;
  border: 1px solid #adadad;
}
.btn-default { border: 2px solid #0078d7; line-height: 29px; }
u { text-underline-offset: 1px; }

/* red marks */
.mark { position: absolute; box-sizing: border-box; border: 7px solid #fb3b3b; }
.mark-cat { left: 16px; top: 380px; width: 78px; height: 59px; }
.mark-type { left: 135px; top: 364px; width: 241px; height: 105px; }

/* watermark */
.wm { position: absolute; pointer-events: none; }
.wm-bai, .wm-cn, .wm-url {
  color: rgba(255, 255, 255, .55);
  -webkit-text-stroke: 1.200px #d0d0d0;
  line-height: 1;
  white-space: nowrap;
}
.wm-bai { left: 1473px; top: 866px; font-family: "Liberation Sans", sans-serif; font-weight: 700; font-size: 76px; }
.wm-paw { left: 1592px; top: 825px; }
.wm-du { font-family: "Liberation Sans", sans-serif; fill: rgba(255, 255, 255, .6); stroke: #d0d0d0; }
.wm-cn { left: 1699px; top: 876px; font-weight: 700; font-size: 56px; }
.wm-url { left: 1477px; top: 946px; font-family: "Liberation Sans", sans-serif; font-size: 39px; letter-spacing: 1.300px; }
</style>

<style>
html, body { margin: 0; overflow: hidden; }
</style>
